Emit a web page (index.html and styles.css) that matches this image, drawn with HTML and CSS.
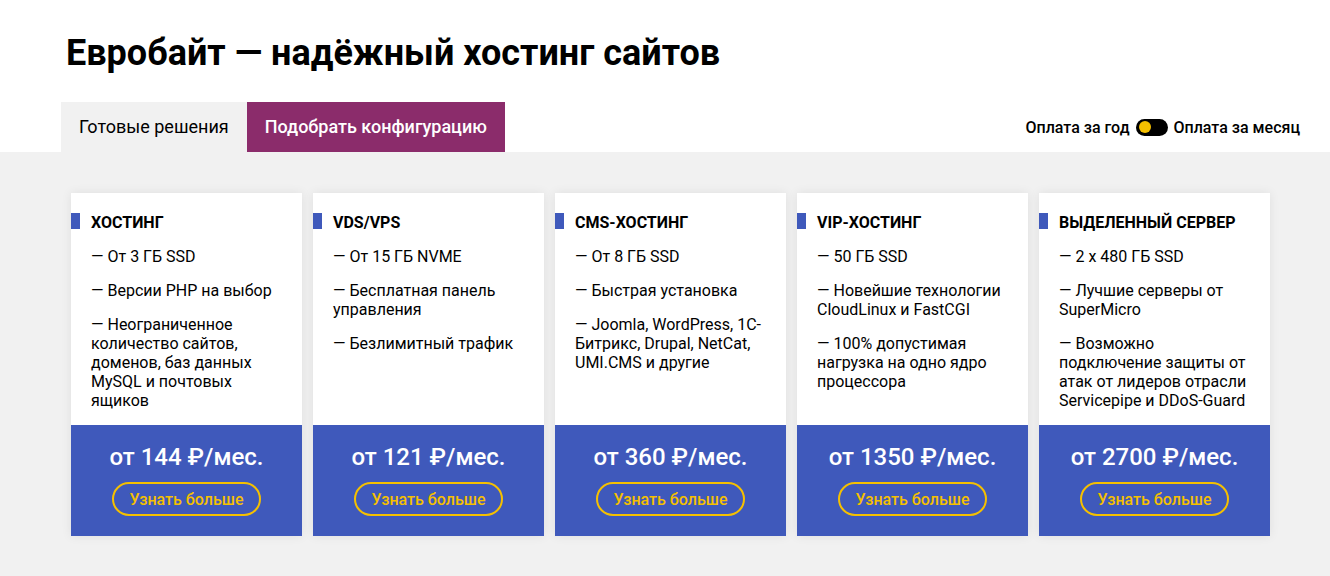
FILE: index.html
```html
<!DOCTYPE html>
<html lang="ru">
<head>
    <meta charset="UTF-8">
    <meta name="viewport" content="width=device-width, initial-scale=1.0">
    <title>Евробайт — хостинг</title>
    <link rel="stylesheet" href="styles.css">
</head>
<body>
    <div class="header">
        <h1>Евробайт — надёжный хостинг сайтов</h1>
        <div class="tabs-row">
            <div class="tabs">
                <div class="tab tab-active">Готовые решения</div>
                <div class="tab tab-config">Подобрать конфигурацию</div>
            </div>
            <div class="pay-switch">
                <span>Оплата за год</span>
                <span class="toggle"><span class="knob"></span></span>
                <span>Оплата за месяц</span>
            </div>
        </div>
    </div>

    <div class="plans">
        <div class="card">
            <div class="card-body">
                <div class="card-title">Хостинг</div>
                <p>— От 3 ГБ SSD</p>
                <p>— Версии PHP на выбор</p>
                <p>— Неограниченное количество сайтов, доменов, баз данных MySQL и почтовых ящиков</p>
            </div>
            <div class="card-price">
                <div class="price">от 144 ₽/мес.</div>
                <button class="more">Узнать больше</button>
            </div>
        </div>
        <div class="card">
            <div class="card-body">
                <div class="card-title">VDS/VPS</div>
                <p>— От 15 ГБ NVME</p>
                <p>— Бесплатная панель управления</p>
                <p>— Безлимитный трафик</p>
            </div>
            <div class="card-price">
                <div class="price">от 121 ₽/мес.</div>
                <button class="more">Узнать больше</button>
            </div>
        </div>
        <div class="card">
            <div class="card-body">
                <div class="card-title">CMS-хостинг</div>
                <p>— От 8 ГБ SSD</p>
                <p>— Быстрая установка</p>
                <p>— Joomla, WordPress, 1С-Битрикс, Drupal, NetCat, UMI.CMS и другие</p>
            </div>
            <div class="card-price">
                <div class="price">от 360 ₽/мес.</div>
                <button class="more">Узнать больше</button>
            </div>
        </div>
        <div class="card">
            <div class="card-body">
                <div class="card-title">VIP-хостинг</div>
                <p>— 50 ГБ SSD</p>
                <p>— Новейшие технологии CloudLinux и FastCGI</p>
                <p>— 100% допустимая нагрузка на одно ядро процессора</p>
            </div>
            <div class="card-price">
                <div class="price">от 1350 ₽/мес.</div>
                <button class="more">Узнать больше</button>
            </div>
        </div>
        <div class="card">
            <div class="card-body">
                <div class="card-title">Выделенный сервер</div>
                <p>— 2 x 480 ГБ SSD</p>
                <p>— Лучшие серверы от SuperMicro</p>
                <p>— Возможно подключение защиты от атак от лидеров отрасли Servicepipe и DDoS-Guard</p>
            </div>
            <div class="card-price">
                <div class="price">от 2700 ₽/мес.</div>
                <button class="more">Узнать больше</button>
            </div>
        </div>
    </div>
</body>
</html>
```

FILE: styles.css
```css
body {
    margin: 0;
    font-family: Roboto, "Noto Sans", Arial, sans-serif;
    color: #000;
    background-color: #f1f1f1;
}
.header {
    background: white;
    padding: 0 30px 0 61px;
}
h1 {
    margin: 0;
    padding: 32px 0 28px 5px;
    font-size: 36px;
    line-height: 42px;
    font-weight: 700;
}
.tabs-row {
    display: flex;
    justify-content: space-between;
    align-items: center;
}
.tabs {
    display: flex;
}
.tab {
    height: 50px;
    line-height: 50px;
    padding: 0 18px;
    font-size: 18px;
}
.tab-active {
    background-color: #f1f1f1;
}
.tab-config {
    background-color: #8b2c6b;
    color: white;
    font-weight: 500;
}
.pay-switch {
    display: flex;
    align-items: center;
    gap: 6px;
    font-size: 16px;
    font-weight: 500;
}
.toggle {
    width: 32px;
    height: 17px;
    border-radius: 9px;
    background: #000;
    display: flex;
    align-items: center;
    padding-left: 3px;
    box-sizing: border-box;
}
.knob {
    width: 12px;
    height: 12px;
    border-radius: 50%;
    background: #f5c000;
}
.plans {
    display: flex;
    gap: 11px;
    padding: 41px 60px 40px 71px;
}
.card {
    width: 231px;
    background: white;
    display: flex;
    flex-direction: column;
    box-shadow: 0 0 10px rgba(0, 0, 0, 0.08);
}
.card-body {
    padding: 20px 12px 15px 20px;
    font-size: 16px;
    line-height: 19px;
}
.card-title {
    position: relative;
    font-weight: 700;
    text-transform: uppercase;
}
.card-title::before {
    content: "";
    position: absolute;
    left: -20px;
    top: 0;
    width: 9px;
    height: 16px;
    background: #3f59bb;
}
.card-body p {
    margin: 15px 0 0;
}
.card-price {
    margin-top: auto;
    height: 111px;
    box-sizing: border-box;
    background: #3f59bb;
    padding-top: 18px;
    text-align: center;
}
.price {
    color: white;
    font-size: 24px;
    line-height: 28px;
    font-weight: 500;
}
.more {
    margin-top: 11px;
    width: 149px;
    height: 34px;
    border: 2px solid #f5c000;
    border-radius: 17px;
    background: transparent;
    color: #f5c000;
    font-family: inherit;
    font-size: 16px;
    font-weight: 500;
    cursor: pointer;
}
```
